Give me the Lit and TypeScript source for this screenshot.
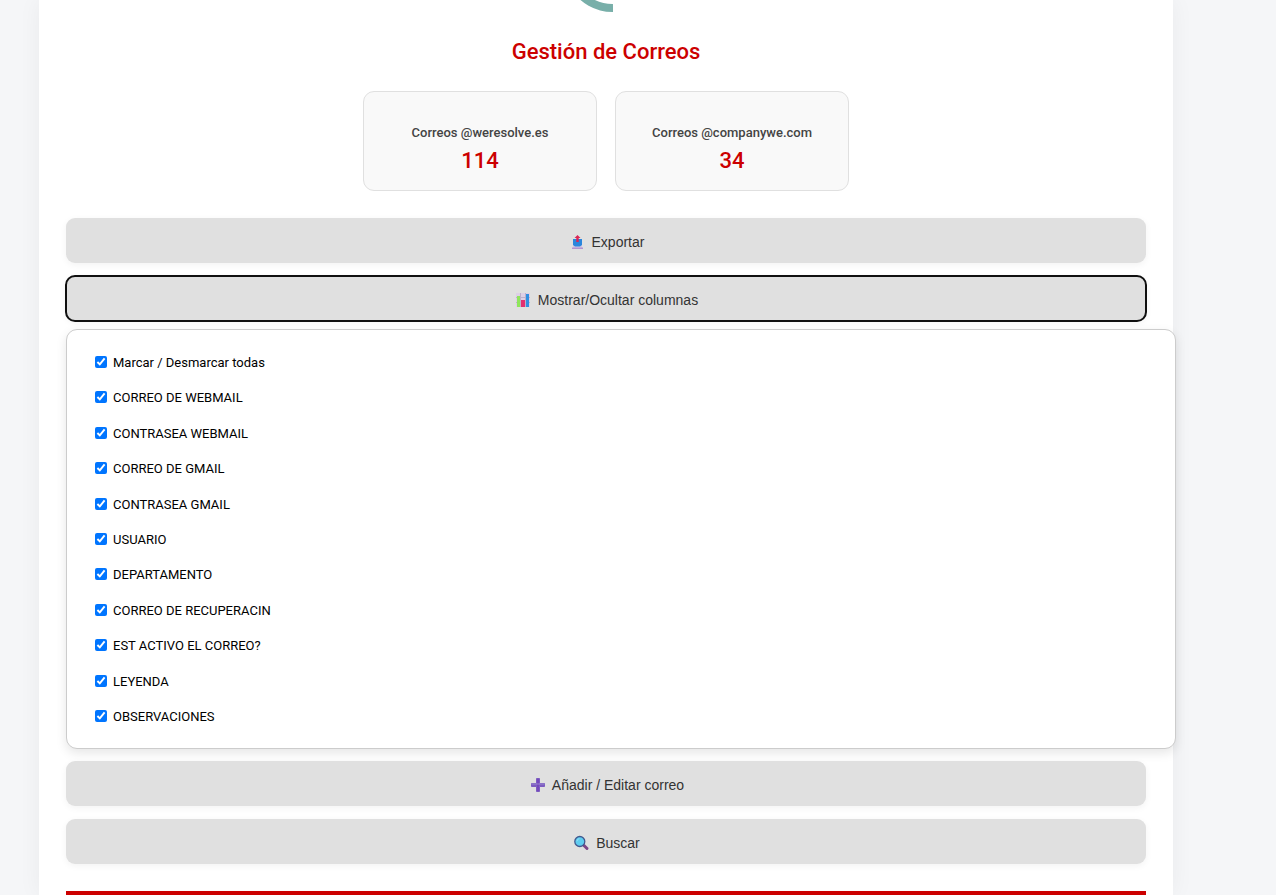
import { LitElement, html, css, svg } from "lit";
import { customElement, state } from "lit/decorators.js";

const icons = {
  export: svg`
    <path d="M5 12 L6 10 H13 L14 12 V15 H5 Z" fill="#d3c6e4"/>
    <path d="M4 13.5 H15 V15 H4 Z" fill="#b294cf"/>
    <path d="M5 5 H14 V11 L12 12.5 H7 L5 11 Z" fill="#2b86dc"/>
    <path d="M9.5 1 L12.5 4 H10.7 V8 H8.3 V4 H6.5 Z" fill="#d92656"/>`,
  chart: svg`
    <rect x="2" y="1" width="14" height="14" fill="#ddd0e6"/>
    <path d="M2 5.5H16M2 10.5H16M6.5 1V15M11.5 1V15" stroke="#bcb0cb" stroke-width="1"/>
    <rect x="3" y="4" width="3" height="11" fill="#8fe65c"/>
    <rect x="7" y="8" width="4" height="7" fill="#e22f70"/>
    <rect x="12" y="2" width="3" height="13" fill="#2f8fe2"/>`,
  plus: svg`
    <path d="M8.5 1.5h3v5h5v3h-5v5h-3v-5h-5v-3h5z" fill="#7c5cc0" stroke="#7c5cc0" stroke-linejoin="round"/>
    <path d="M10 2v12" stroke="#7548bd" stroke-width="2"/>
    <path d="M3.5 7h13" stroke="#9a86cf" stroke-width="1"/>`,
  search: svg`
    <path d="M12 10.5 L15 13.5" stroke="#7d4687" stroke-width="3" stroke-linecap="round"/>
    <circle cx="7.8" cy="6.5" r="5" fill="#5fcdf0" stroke="#41598f" stroke-width="1.3"/>
    <path d="M5 6.2a2.8 2.8 0 0 1 2.4-2.6" stroke="#8fe0f8" fill="none"/>`,
};

@customElement("app-root")
export class AppRoot extends LitElement {
  static styles = css`
    :host {
      display: block;
      height: 100vh;
      overflow: hidden;
      box-sizing: border-box;
      padding: 0 64px 0 0;
      background: #f5f6f8;
      font-family: Roboto, sans-serif;
      font-size: 13px;
      color: #000;
    }
    .sheet {
      box-sizing: border-box;
      max-width: 1134px;
      min-height: 100vh;
      margin: 0 auto;
      padding: 0 27px;
      background: #fff;
      box-shadow: 0 0 22px rgba(0, 0, 0, 0.05);
    }
    .logo {
      display: block;
      width: 64px;
      height: 13px;
      margin: 0 auto;
    }
    h1 {
      margin: 25px 0 26px;
      font-size: 22px;
      line-height: 27px;
      font-weight: 500;
      text-align: center;
      color: #cc0000;
    }
    .cards {
      display: flex;
      justify-content: center;
      gap: 18px;
      margin-bottom: 27px;
    }
    .card {
      box-sizing: border-box;
      width: 234px;
      padding: 32px 18px 15px;
      border: 1px solid #e0e0e0;
      border-radius: 11px;
      background: #f9f9f9;
      text-align: center;
    }
    .card h2 {
      margin: 0;
      font-size: 13px;
      line-height: 18px;
      font-weight: 500;
      color: #444;
    }
    .card p {
      margin: 5px 0 0;
      font-size: 22px;
      line-height: 28px;
      font-weight: 500;
      color: #cc0000;
    }
    .action {
      display: flex;
      align-items: center;
      justify-content: center;
      gap: 4px;
      width: 100%;
      height: 45px;
      margin: 0 0 13px;
      padding: 3px 18px 0;
      border: 0;
      border-radius: 9px;
      background: #e0e0e0;
      box-shadow: 0 2px 7px rgba(0, 0, 0, 0.05);
      font-family: "Liberation Sans", Arial, sans-serif;
      font-size: 14px;
      color: #333;
      cursor: pointer;
    }
    .action.open {
      margin-bottom: 8px;
      outline: 2px solid #101010;
      outline-offset: -1px;
    }
    .icon {
      width: 20px;
      height: 16px;
    }
    .panel {
      display: flex;
      flex-direction: column;
      justify-content: space-between;
      box-sizing: border-box;
      min-height: 420px;
      margin: 0 -30px 12px 0;
      padding: 24px 28px 22px;
      border: 1px solid #ccc;
      border-radius: 11px;
      background: #fff;
      box-shadow: 0 4px 11px rgba(0, 0, 0, 0.1);
    }
    .option {
      display: flex;
      align-items: flex-start;
      gap: 6px;
      line-height: 18px;
    }
    .option input {
      width: 12px;
      height: 12px;
      margin: 2px 0 0;
    }
    .rule {
      height: 4px;
      margin: 27px 0 0;
      border: 0;
      background: #cc0000;
    }
  `;

  @state() private open = true;
  @state() private columns = [
    "CORREO DE WEBMAIL",
    "CONTRASEA WEBMAIL",
    "CORREO DE GMAIL",
    "CONTRASEA GMAIL",
    "USUARIO",
    "DEPARTAMENTO",
    "CORREO DE RECUPERACIN",
    "EST ACTIVO EL CORREO?",
    "LEYENDA",
    "OBSERVACIONES",
  ].map((name) => ({ name, shown: true }));

  private toggleAll(e: Event) {
    const shown = (e.target as HTMLInputElement).checked;
    this.columns = this.columns.map((c) => ({ ...c, shown }));
  }

  private toggle(index: number) {
    this.columns = this.columns.map((c, i) => (i === index ? { ...c, shown: !c.shown } : c));
  }

  private icon(name: keyof typeof icons) {
    return html`<svg class="icon" viewBox="0 0 20 16" aria-hidden="true">${icons[name]}</svg>`;
  }

  render() {
    return html`
      <main class="sheet">
        <svg class="logo" viewBox="574 0 64 13" aria-hidden="true">
          <path d="M613 8 A44.7 44.7 0 0 1 574 -14" fill="none" stroke="#78afa9" stroke-width="8" />
        </svg>
        <h1>Gestión de Correos</h1>
        <section class="cards">
          <div class="card"><h2>Correos @weresolve.es</h2><p>114</p></div>
          <div class="card"><h2>Correos @companywe.com</h2><p>34</p></div>
        </section>
        <button class="action" type="button">${this.icon("export")}<span>Exportar</span></button>
        <button
          class="action ${this.open ? "open" : ""}"
          type="button"
          aria-expanded=${this.open}
          @click=${() => (this.open = !this.open)}
        >
          ${this.icon("chart")}<span>Mostrar/Ocultar columnas</span>
        </button>
        ${this.open
          ? html`<div class="panel">
              <label class="option">
                <input
                  type="checkbox"
                  .checked=${this.columns.every((c) => c.shown)}
                  @change=${this.toggleAll}
                />Marcar / Desmarcar todas
              </label>
              ${this.columns.map(
                (c, i) => html`<label class="option">
                  <input type="checkbox" .checked=${c.shown} @change=${() => this.toggle(i)} />${c.name}
                </label>`
              )}
            </div>`
          : null}
        <button class="action" type="button">${this.icon("plus")}<span>Añadir / Editar correo</span></button>
        <button class="action" type="button">${this.icon("search")}<span>Buscar</span></button>
        <hr class="rule" />
      </main>
    `;
  }
}
